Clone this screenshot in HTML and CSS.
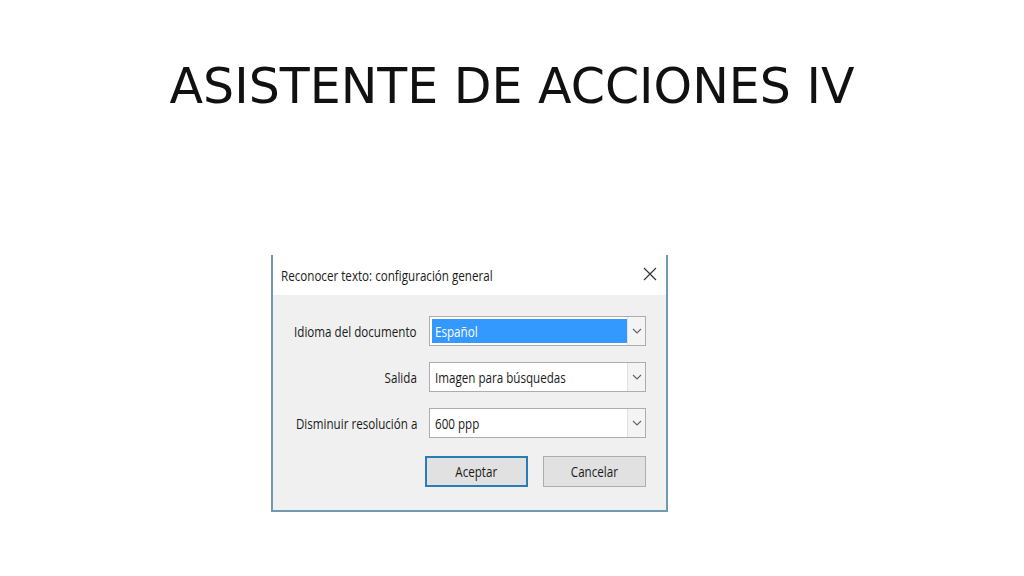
FILE: index.html
```html
<!DOCTYPE html>
<html lang="es">
<head>
<meta charset="utf-8">
<link rel="stylesheet" href="styles.css">
</head>
<body>
<div class="slide">
  <h1 class="title">ASISTENTE DE ACCIONES IV</h1>
  <div class="dialog">
    <div class="dlg-head">
      <span class="t">Reconocer texto: configuración general</span>
      <svg class="close" width="14" height="14" viewBox="0 0 14 14"><path d="M1 1L13 13M13 1L1 13" stroke="#333" stroke-width="1.2" fill="none"/></svg>
    </div>
    <div class="dlg-body">
      <div class="row">
        <span class="t r">Idioma del documento</span>
        <div class="combo"><span class="value selected"><span class="t">Español</span></span><span class="arrow"><svg width="10" height="6" viewBox="0 0 10 6"><path d="M1 1L5 5L9 1" stroke="#666" stroke-width="1.2" fill="none"/></svg></span></div>
      </div>
      <div class="row">
        <span class="t r">Salida</span>
        <div class="combo"><span class="value"><span class="t">Imagen para búsquedas</span></span><span class="arrow"><svg width="10" height="6" viewBox="0 0 10 6"><path d="M1 1L5 5L9 1" stroke="#666" stroke-width="1.2" fill="none"/></svg></span></div>
      </div>
      <div class="row">
        <span class="t r">Disminuir resolución a</span>
        <div class="combo"><span class="value"><span class="t">600 ppp</span></span><span class="arrow"><svg width="10" height="6" viewBox="0 0 10 6"><path d="M1 1L5 5L9 1" stroke="#666" stroke-width="1.2" fill="none"/></svg></span></div>
      </div>
      <div class="buttons">
        <button class="btn primary"><span class="t c">Aceptar</span></button>
        <button class="btn"><span class="t c">Cancelar</span></button>
      </div>
    </div>
  </div>
</div>
</body>
</html>
```
FILE: styles.css
```css
* { box-sizing: border-box; }
html, body { margin: 0; padding: 0; background: #fff; }
.slide {
  width: 1024px;
  height: 576px;
  display: flex;
  flex-direction: column;
  align-items: center;
}
.title {
  margin: 58px 0 0 0;
  font-family: "DejaVu Sans", sans-serif;
  font-weight: normal;
  font-size: 49px;
  line-height: 58px;
  color: #111;
}
.dialog {
  align-self: flex-start;
  margin: 139px 0 0 271px;
  width: 397px;
  height: 257px;
  border-left: 2px solid #6f9ab0;
  border-right: 2px solid #6f9ab0;
  border-bottom: 2px solid #6f9ab0;
  background: #f0f0f0;
  font-family: "Open Sans", sans-serif;
  color: #1a1a1a;
  display: flex;
  flex-direction: column;
}
.t {
  display: inline-block;
  font-size: 14px;
  white-space: nowrap;
  transform: scaleX(0.83);
  transform-origin: left center;
}
.t.r { transform-origin: right center; }
.t.c { transform-origin: center center; }
.dlg-head {
  height: 40px;
  background: #fff;
  display: flex;
  align-items: center;
  justify-content: space-between;
  padding: 0 9px 0 8px;
}
.close { margin-top: -3px; }
.dlg-body {
  flex: 1;
  padding: 21px 20px 0 0;
  display: flex;
  flex-direction: column;
  gap: 16px;
}
.row {
  display: flex;
  align-items: center;
  justify-content: flex-end;
  gap: 12px;
}
.row > * { flex-shrink: 0; }
.combo {
  width: 217px;
  height: 30px;
  border: 1px solid #adadad;
  background: #fff;
  display: flex;
  align-items: stretch;
  padding: 2px 0 2px 2px;
}
.value {
  flex: 1;
  line-height: 24px;
  padding-left: 3px;
  overflow: hidden;
}
.value.selected {
  background: #3399ff;
  color: #fff;
}
.arrow {
  width: 18px;
  display: flex;
  align-items: center;
  justify-content: center;
  background: #f4f4f4;
  margin: -2px 0;
  border-left: 1px solid #e0e0e0;
}
.buttons {
  display: flex;
  justify-content: flex-end;
  gap: 15px;
  margin-top: 2px;
}
.btn {
  width: 103px;
  height: 31px;
  font-family: "Open Sans", sans-serif;
  color: #1a1a1a;
  background: #e1e1e1;
  border: 1px solid #adadad;
  padding: 0;
}
.btn.primary {
  border: 2px solid #2a7cb8;
}
```
